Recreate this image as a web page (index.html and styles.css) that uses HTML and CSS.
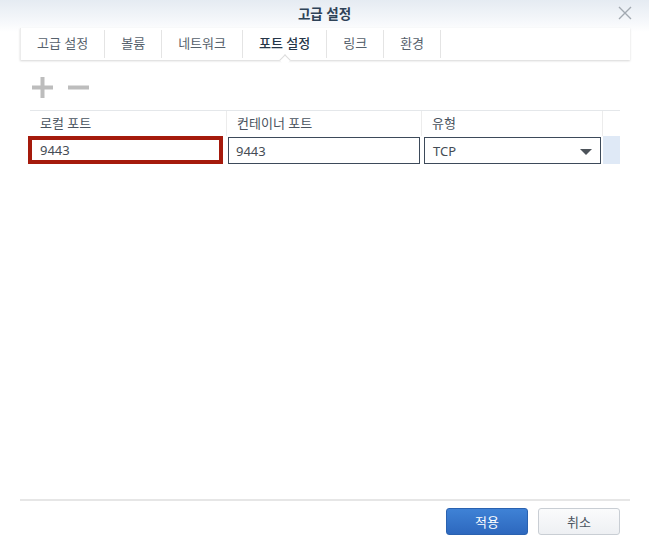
FILE: index.html
```html
<!DOCTYPE html>
<html lang="ko">
<head>
<meta charset="utf-8">
<title>고급 설정</title>
<link rel="stylesheet" href="styles.css">
</head>
<body>
<div class="dialog">
  <div class="titlebar">
    <span class="title">고급 설정</span>
    <span class="close">
      <svg width="14" height="14" viewBox="0 0 14 14"><path d="M1 1 L13 13 M13 1 L1 13" stroke="#a2a9b1" stroke-width="1.4" fill="none"/></svg>
    </span>
  </div>
  <div class="tabs">
    <div class="tab">고급 설정</div>
    <div class="tab">볼륨</div>
    <div class="tab">네트워크</div>
    <div class="tab active">포트 설정</div>
    <div class="tab">링크</div>
    <div class="tab">환경</div>
  </div>
  <div class="toolbar">
    <svg class="tool" width="21" height="21" viewBox="0 0 21 21"><path d="M0 10.5 H21 M10.5 0 V21" stroke="#bdbdbd" stroke-width="4" fill="none"/></svg>
    <svg class="tool" width="21" height="21" viewBox="0 0 21 21"><path d="M0 10.5 H21" stroke="#bdbdbd" stroke-width="4" fill="none"/></svg>
  </div>
  <div class="grid">
    <div class="head">
      <div class="hc c1">로컬 포트</div>
      <div class="hc c2">컨테이너 포트</div>
      <div class="hc c3">유형</div>
      <div class="hc c4"></div>
    </div>
    <div class="row">
      <div class="cell c1"><div class="field marked">9443</div></div>
      <div class="cell c2"><div class="field f2">9443</div></div>
      <div class="cell c3"><div class="field f3"><span>TCP</span><span class="arrow"></span></div></div>
      <div class="cell c4 sel"></div>
    </div>
  </div>
  <div class="spacer"></div>
  <div class="footer">
    <button class="btn primary">적용</button>
    <button class="btn">취소</button>
  </div>
</div>
</body>
</html>
```

FILE: styles.css
```css
html, body {
  margin: 0;
  padding: 0;
  background: #ffffff;
}
body {
  width: 649px;
  height: 544px;
  overflow: hidden;
  font-family: "Noto Sans", "Noto Sans CJK KR", sans-serif;
  font-size: 13px;
  color: #4a5460;
}
.dialog {
  height: 544px;
  display: flex;
  flex-direction: column;
  background: linear-gradient(to bottom, #e5ebf2 0px, #f6f8fb 22px, #ffffff 32px);
}
.titlebar {
  height: 28px;
  display: flex;
  align-items: center;
  justify-content: center;
  position: relative;
}
.title {
  font-size: 13.5px;
  font-weight: 700;
  color: #2e4257;
  margin-top: -2px;
}
.close {
  position: absolute;
  right: 17px;
  top: 6px;
  width: 14px;
  height: 14px;
}
.tabs {
  margin: 0 19px 0 20px;
  height: 32px;
  display: flex;
  background: #ffffff;
  border-left: 1px solid #ececec;
  box-shadow: 0 1px 2px rgba(0, 0, 0, 0.16);
  position: relative;
}
.tab {
  height: 28px;
  margin-top: 2px;
  line-height: 27px;
  padding: 0 16px;
  border-right: 1px solid #e4e4e4;
  color: #56616c;
  position: relative;
}
.tab.active {
  color: #263648;
  font-weight: 500;
}
.tab.active::after {
  content: "";
  position: absolute;
  left: 50%;
  bottom: -6px;
  width: 7px;
  height: 7px;
  margin-left: -4px;
  background: #ffffff;
  border-left: 1px solid #dcdcdc;
  border-top: 1px solid #dcdcdc;
  transform: rotate(45deg);
}
.toolbar {
  height: 50px;
  display: flex;
  align-items: center;
  gap: 15px;
  padding-left: 32px;
  padding-top: 4px;
  box-sizing: border-box;
}
.grid {
  margin: 0 29px 0 30px;
  border-top: 1px solid #e4e7ea;
}
.head, .row {
  display: flex;
}
.c1 { width: 197px; }
.c2 { width: 195px; }
.c3 { width: 181px; }
.c4 { flex: 1; }
.hc {
  height: 25px;
  line-height: 24px;
  padding-left: 10px;
  box-sizing: border-box;
  border-right: 1px solid #ececec;
  color: #4a5460;
}
.hc.c4 { border-right: none; }
.row {
  height: 28px;
}
.cell {
  height: 28px;
  box-sizing: border-box;
  position: relative;
}
.cell.sel {
  background: #dfe9f6;
}
.field {
  box-sizing: border-box;
  background: #ffffff;
  font-size: 13px;
  color: #444c55;
  display: flex;
  align-items: center;
}
.marked {
  margin-left: -2px;
  width: 195px;
  height: 28px;
  border: 4px solid #a51a0c;
  padding-left: 8px;
}
.f2 {
  margin-left: 1px;
  margin-top: 1px;
  width: 192px;
  height: 27px;
  border: 1px solid #3d4a5a;
  padding-left: 7px;
}
.f3 {
  margin-left: 2px;
  margin-top: 1px;
  width: 177px;
  height: 27px;
  border: 1px solid #3d4a5a;
  padding-left: 8px;
  padding-right: 8px;
  justify-content: space-between;
}
.arrow {
  width: 0;
  height: 0;
  border-left: 6px solid transparent;
  border-right: 6px solid transparent;
  border-top: 6px solid #4d535a;
  margin-top: 2px;
}
.spacer { flex: 1; }
.footer {
  margin: 0 19px 0 20px;
  border-top: 2px solid #e6e6e6;
  padding: 7px 10px 9px 0;
  display: flex;
  justify-content: flex-end;
  gap: 10px;
}
.btn {
  width: 82px;
  height: 27px;
  box-sizing: border-box;
  border-radius: 3px;
  font-family: "Noto Sans", "Noto Sans CJK KR", sans-serif;
  font-size: 13px;
  padding: 0;
  border: 1px solid #c9ced4;
  background: linear-gradient(to bottom, #fafbfc, #eef0f3);
  color: #4a5460;
}
.btn.primary {
  border: 1px solid #2a62b0;
  background: linear-gradient(to bottom, #3f82d6, #2d68be);
  color: #ffffff;
}
```
